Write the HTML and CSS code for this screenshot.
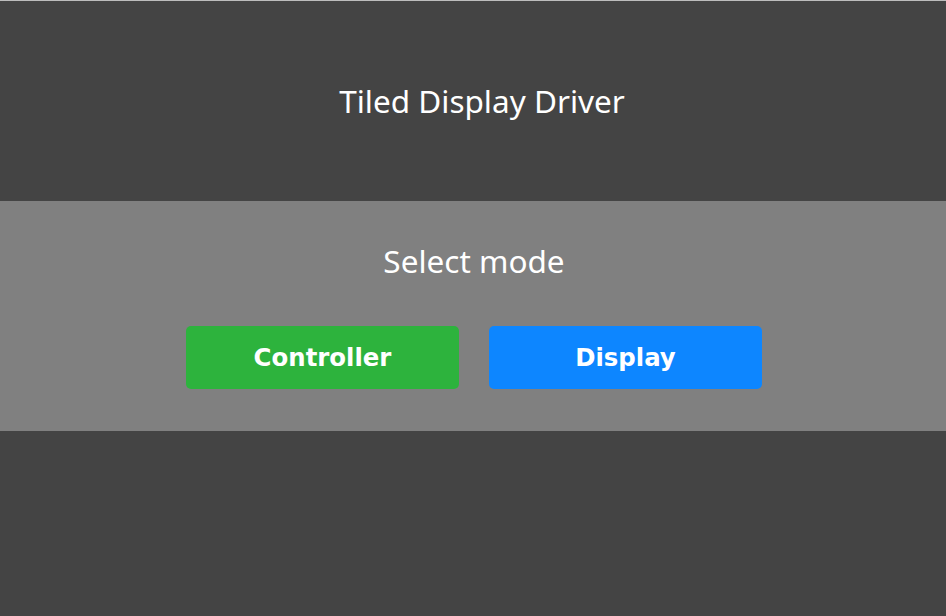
FILE: index.html
```html
<!DOCTYPE html>
<html>
<head>
<meta charset="utf-8">
<link rel="stylesheet" href="styles.css">
</head>
<body>
<div class="page">
  <header class="top">
    <h1 class="title">Tiled Display Driver</h1>
  </header>
  <section class="band">
    <h2 class="subtitle">Select mode</h2>
    <div class="buttons">
      <button class="btn btn-green">Controller</button>
      <button class="btn btn-blue">Display</button>
    </div>
  </section>
</div>
</body>
</html>
```
FILE: styles.css
```css
html, body {
  margin: 0;
  padding: 0;
  background: #444444;
  height: 100%;
}
body {
  font-family: "Noto Sans", "DejaVu Sans", sans-serif;
  color: #ffffff;
}
.page {
  border-top: 1px solid #bdbdbd;
}
.top {
  height: 200px;
  display: flex;
  align-items: center;
  justify-content: center;
}
.title {
  margin: 0;
  font-size: 31.5px;
  font-weight: normal;
  padding-left: 18px;
  padding-bottom: 2px;
}
.band {
  background: #808080;
  height: 230px;
  display: flex;
  flex-direction: column;
  align-items: center;
  box-sizing: border-box;
  padding-top: 40px;
}
.subtitle {
  margin: 0;
  font-size: 31.5px;
  font-weight: normal;
  line-height: 40px;
  padding-left: 2px;
}
.buttons {
  display: flex;
  gap: 30px;
  margin-top: 45px;
  padding-left: 2px;
}
.btn {
  width: 273px;
  height: 63px;
  border: none;
  border-radius: 5px;
  color: #ffffff;
  font-family: "DejaVu Sans", sans-serif;
  font-weight: bold;
  font-size: 24.4px;
  padding: 0;
}
.btn-green { background: #2db33d; }
.btn-blue { background: #0d86ff; }
```
